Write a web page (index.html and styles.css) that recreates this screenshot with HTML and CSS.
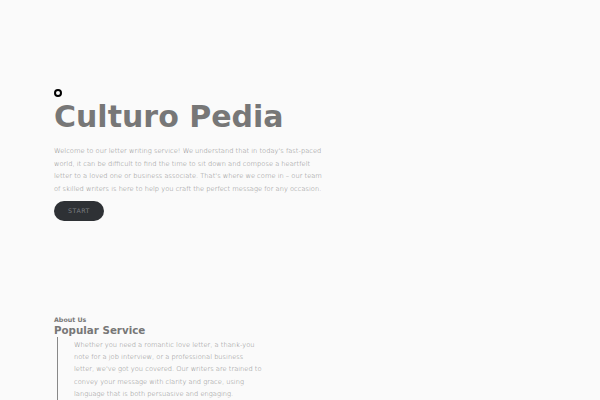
FILE: index.html
```html
<!DOCTYPE html>
<html>
<head>
<meta charset="utf-8">
<link rel="stylesheet" href="styles.css">
</head>
<body>
<section class="hero">
  <span class="dot"></span>
  <h1 class="title">Culturo Pedia</h1>
  <p class="lead">Welcome to our letter writing service! We understand that in today's fast-paced world, it can be difficult to find the time to sit down and compose a heartfelt letter to a loved one or business associate. That's where we come in – our team of skilled writers is here to help you craft the perfect message for any occasion.</p>
  <a class="btn">START</a>
</section>
<section class="about">
  <div class="kicker">About Us</div>
  <h2 class="subtitle">Popular Service</h2>
  <div class="quote">
    <p class="quote-text">Whether you need a romantic love letter, a thank-you note for a job interview, or a professional business letter, we've got you covered. Our writers are trained to convey your message with clarity and grace, using language that is both persuasive and engaging.</p>
    <span class="rule"></span>
  </div>
</section>
</body>
</html>
```
FILE: styles.css
```css
html, body { margin: 0; padding: 0; }
body {
  background: #fafafa;
  font-family: "DejaVu Sans", sans-serif;
  width: 600px;
  height: 400px;
  overflow: hidden;
}
.hero {
  padding: 89px 0 0 54px;
  display: flex;
  flex-direction: column;
  align-items: flex-start;
}
.dot {
  width: 4px;
  height: 4px;
  border: 2px solid #000;
  border-radius: 50%;
}
.title {
  margin: 0;
  font-size: 30px;
  font-weight: bold;
  color: #777;
  line-height: 39px;
}
.lead {
  margin: 9px 0 0;
  width: 272px;
  font-family: "DejaVu Sans", sans-serif;
  font-weight: 200;
  font-size: 6.7px;
  line-height: 12.7px;
  color: #858585;
}
.btn {
  margin-top: 5px;
  width: 50px;
  height: 20px;
  border-radius: 10px;
  background: #2e3135;
  color: #7c7f84;
  font-family: "DejaVu Sans", sans-serif;
  font-size: 6.3px;
  letter-spacing: 0.5px;
  display: flex;
  align-items: center;
  justify-content: center;
}
.about {
  padding: 94px 0 0 54px;
}
.kicker {
  font-size: 6.3px;
  font-weight: bold;
  color: #777;
  line-height: 9px;
}
.subtitle {
  margin: 0;
  font-size: 10.3px;
  font-weight: bold;
  color: #777;
  line-height: 13px;
}
.quote {
  margin-left: 3px;
  border-left: 1px solid #888;
  padding: 0 0 0 16px;
  width: 190px;
}
.quote-text {
  margin: 0;
  font-family: "DejaVu Sans", sans-serif;
  font-weight: 200;
  font-size: 6.7px;
  line-height: 12.3px;
  padding-top: 2px;
  color: #858585;
}
.rule {
  display: block;
  width: 76px;
  height: 1px;
  background: #888;
  margin: 3px 0 0 -9px;
}
```
